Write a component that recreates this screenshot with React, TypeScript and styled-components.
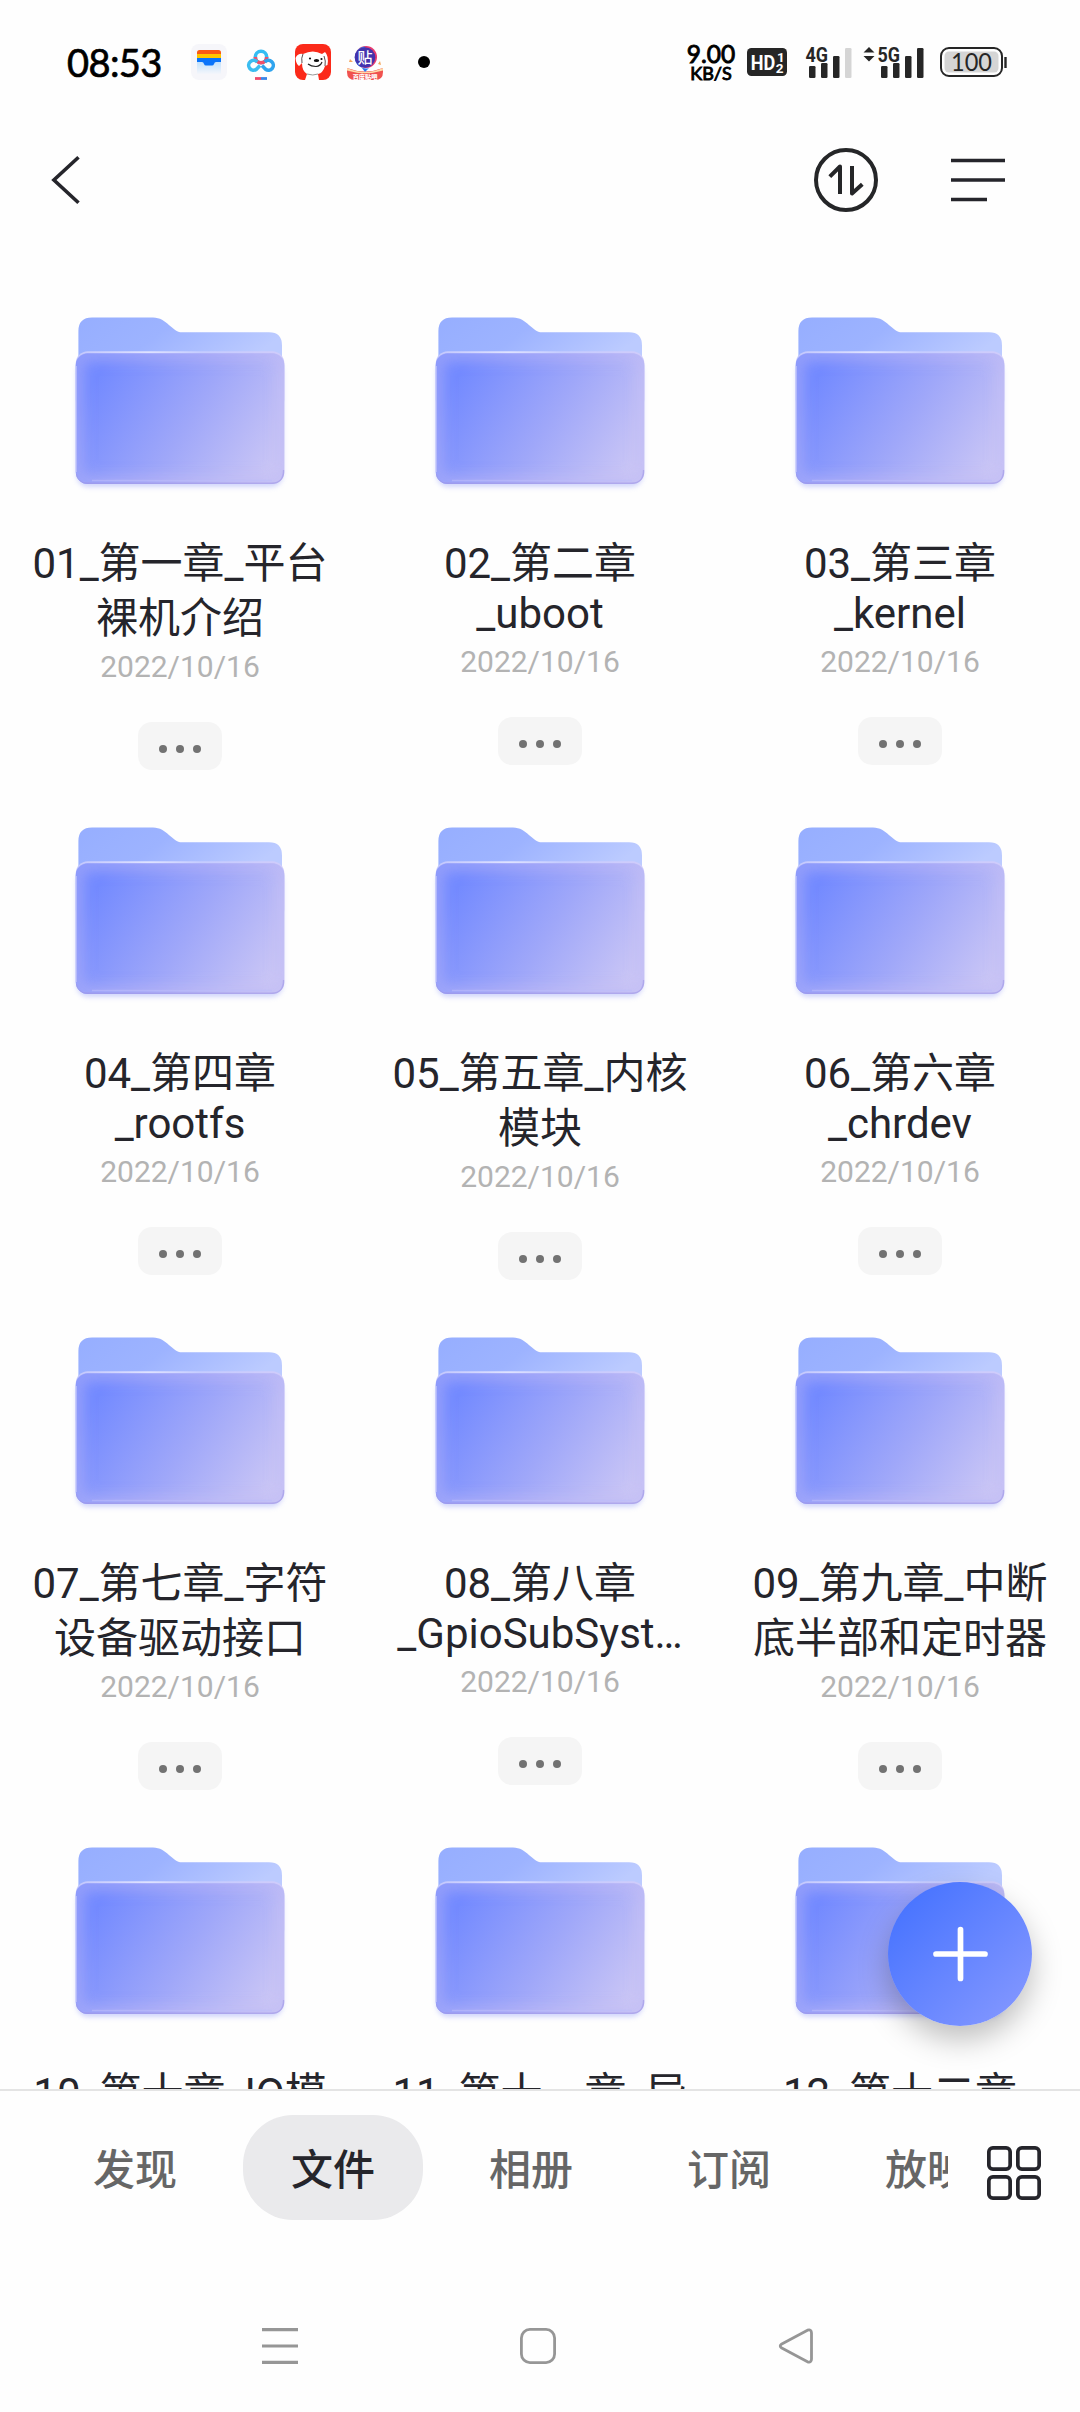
import React from 'react';
import styled, { createGlobalStyle } from 'styled-components';

const GlobalStyle = createGlobalStyle`
  * { box-sizing: border-box; }
  body {
    margin: 0;
    background: #fefefe;
    font-family: Roboto, 'Noto Sans CJK SC', sans-serif;
  }
`;

const Screen = styled.div`
  position: relative;
  display: flex;
  flex-direction: column;
  width: 1080px;
  height: 2412px;
  overflow: hidden;
  background: #fefefe;
  color: #25252b;
`;

/* ---------- status bar ---------- */

const StatusBar = styled.div`
  display: flex;
  justify-content: space-between;
  align-items: center;
  height: 120px;
  padding: 4px 72px 0 66px;
`;

const StatusGroup = styled.div<{ $gap?: number; $offset?: number }>`
  display: flex;
  align-items: center;
  gap: ${(p) => p.$gap ?? 0}px;
  margin-left: ${(p) => p.$offset ?? 0}px;
`;

const Clock = styled.div`
  width: 125px;
  padding-left: 1px;
  font-family: Lato, sans-serif;
  font-size: 38px;
  font-weight: 400;
  letter-spacing: -0.6px;
  line-height: 40px;
  color: #000;
  -webkit-text-stroke: 0.7px #000;
`;

const MoreDot = styled.div`
  width: 12px;
  height: 12px;
  margin-left: 35px;
  border-radius: 50%;
  background: #000;
`;

const Speed = styled.div`
  display: flex;
  flex-direction: column;
  align-items: center;
  width: 52px;
  margin-right: 10px;
  font-family: Lato, sans-serif;
  color: #000;
  -webkit-text-stroke: 0.9px #000;
`;

const SpeedValue = styled.span`
  font-size: 24.5px;
  font-weight: 400;
  line-height: 22px;
`;

const SpeedUnit = styled.span`
  font-size: 18px;
  font-weight: 400;
  line-height: 16px;
`;

const WalletIcon = () => (
  <svg width="36" height="36" viewBox="0 0 36 36">
    <defs>
      <linearGradient id="walletFade" x1="0" y1="0" x2="0" y2="1">
        <stop offset="0" stopColor="#bfe0fb" />
        <stop offset="1" stopColor="#f4f6fb" />
      </linearGradient>
    </defs>
    <rect width="36" height="36" rx="8" fill="#f6f6fa" />
    <rect x="6" y="17" width="24" height="13" fill="url(#walletFade)" />
    <path d="M6 10V8.500Q6 6 8.500 6H27.500Q30 6 30 8.500V10Z" fill="#fa5a14" />
    <rect x="6" y="10" width="24" height="4" fill="#ffc600" />
    <path d="M6 14H30V18H25Q23.500 18 23 20Q22.500 21.500 21 21.500H15Q13.500 21.500 13 20Q12.500 18 11 18H6Z" fill="#0a74fa" />
  </svg>
);

const CloudIcon = () => (
  <svg width="36" height="36" viewBox="0 0 36 36" fill="none" strokeWidth="3.600">
    <circle cx="18" cy="13" r="5.700" stroke="#35bdf3" />
    <path d="M12.300 13A5.700 5.700 0 0 0 23.700 13" stroke="#f0506a" />
    <path d="M14.200 18A4.900 4.900 0 1 0 13.500 25.200L17 21.500" stroke="#3bbdf0" />
    <path d="M21.800 18A4.900 4.900 0 1 1 22.500 25.200L19 21.500" stroke="#2fa4ee" />
    <path d="M12 34.500H18" stroke="#ef4a68" strokeWidth="2.800" />
    <path d="M18 34.500H24" stroke="#3a86e8" strokeWidth="2.800" />
  </svg>
);

const DogIcon = () => (
  <svg width="36" height="36" viewBox="0 0 36 36">
    <rect width="36" height="36" rx="8" fill="#fb2a1a" />
    <path d="M8 10Q18 5 27 10L30 8Q34 12 32.500 21L30 22Q28 29 23 30L24 36H10L12 30Q7 27 7 19L4 22Q1 20 0.500 14Q3 9 8 10Z" fill="#fff" />
    <path d="M7 19Q6 14 8 10M30 22Q31 17 29 12" fill="none" stroke="#4a3a3a" strokeWidth="0.900" />
    <ellipse cx="21.500" cy="16.500" rx="2.700" ry="1.600" fill="#111" />
    <circle cx="15" cy="14.500" r="1.100" fill="#111" />
    <circle cx="26.500" cy="15" r="1.100" fill="#111" />
    <path d="M13 20Q16 22.500 21 22.500Q25.500 22 27 18" fill="none" stroke="#222" strokeWidth="1.200" />
    <path d="M12 30Q18 32 23 30" fill="none" stroke="#999" strokeWidth="1" />
  </svg>
);

const TiebaIcon = () => (
  <svg width="36" height="36" viewBox="0 0 36 36">
    <path d="M0 24Q18 31 36 24V28Q36 36 28 36H8Q0 36 0 28Z" fill="#f0524f" />
    <path d="M0 24Q18 32 36 24V26.500Q18 32 0 26.500Z" fill="#ffd9a8" />
    <path d="M3 15L6 18L2 18ZM33 17L34 21L31 20Z" fill="#f5a65b" />
    <circle cx="19" cy="13" r="11" fill="#e63a6f" />
    <path d="M18 2.500A11 11 0 1 0 22 24L18 28L15 24Z" fill="#2b7bf0" />
    <circle cx="18" cy="13.500" r="10.300" fill="#4433ad" />
    <text x="18" y="19" textAnchor="middle" fontFamily="'Noto Sans CJK SC', sans-serif" fontSize="15" fontWeight="500" fill="#fff">贴</text>
    <text x="18" y="34.500" textAnchor="middle" fontFamily="'Noto Sans CJK SC', sans-serif" fontSize="6.200" fontWeight="900" fill="#fff">百度贴吧</text>
  </svg>
);

const HdIcon = () => (
  <svg width="40" height="28" viewBox="0 0 40 28" fontFamily="Roboto, sans-serif" fontWeight="700" fill="#fff">
    <rect width="40" height="28" rx="4.500" fill="#262626" />
    <text x="3.800" y="21.500" fontSize="21" textLength="24.500" lengthAdjust="spacingAndGlyphs">HD</text>
    <text x="30" y="13.500" fontSize="13.500">1</text>
    <text x="28.800" y="25" fontSize="13.500">2</text>
  </svg>
);

const barTops = [20, 17, 10, 2];

const Signal = ({ label, active, arrows }: { label: string; active: number; arrows?: boolean }) => (
  <svg width={arrows ? 62 : 48} height="32" viewBox={arrows ? '-14 0 62 32' : '0 0 48 32'} fill="#262626">
    {barTops.map((top, i) => (
      <rect key={top} x={4 + i * 12} y={top} width="6.500" height={32 - top} rx="1.300" fill={i < active ? '#262626' : '#d5d5d5'} />
    ))}
    <text x="0.500" y="15.500" fontFamily="Roboto, sans-serif" fontWeight="700" fontSize="20.500" textLength="22.500" lengthAdjust="spacingAndGlyphs" stroke="#fefefe" strokeWidth="2" paintOrder="stroke">{label}</text>
    {arrows && <path d="M-13.500 6.500L-8 1L-2.500 6.500ZM-13.500 10L-8 15.500L-2.500 10Z" />}
  </svg>
);

const Battery = () => (
  <svg width="68" height="30" viewBox="0 0 68 30">
    <rect x="1" y="1" width="61" height="28" rx="8" fill="#fefefe" stroke="#262626" strokeWidth="2" />
    <rect x="4.500" y="4.500" width="54" height="21" rx="4.500" fill="#d5d5d5" />
    <path d="M65.500 10V21" stroke="#262626" strokeWidth="2.400" />
    <text x="31.500" y="24" textAnchor="middle" fontFamily="Lato, sans-serif" fontSize="24.500" textLength="41" lengthAdjust="spacingAndGlyphs" fill="#262626">100</text>
  </svg>
);

/* ---------- header ---------- */

const Header = styled.header`
  display: flex;
  align-items: center;
  justify-content: space-between;
  flex: none;
  height: 120px;
  padding: 0 75px 0 50px;
`;

const HeaderActions = styled.div`
  display: flex;
  align-items: center;
  gap: 73px;
`;

const BackIcon = () => (
  <svg width="32" height="50" viewBox="0 0 32 50" fill="none" stroke="#25252b" strokeWidth="3.600">
    <path d="M28.500 2.200L3.900 25L28.500 47.800" />
  </svg>
);

const TransferIcon = () => (
  <svg width="64" height="64" viewBox="0 0 64 64" fill="none" stroke="#252628" strokeWidth="4">
    <circle cx="32" cy="32" r="30" />
    <path d="M26 46V18.500L15.800 28.700" strokeLinejoin="round" />
    <path d="M38 18V45.500L48.300 36.300" strokeLinejoin="round" />
  </svg>
);

const MenuIcon = () => (
  <svg width="54" height="44" viewBox="0 0 54 44" stroke="#25252b" strokeWidth="3.500">
    <path d="M0 2.500H54M0 22H54M0 41.500H36" />
  </svg>
);

/* ---------- folders ---------- */

const FolderArea = styled.main`
  flex: none;
  height: 1849px;
  overflow: hidden;
`;

const FolderGrid = styled.div`
  display: grid;
  grid-template-columns: repeat(3, 360px);
  grid-auto-rows: 510px;
  padding-top: 50px;
`;

const FolderCell = styled.div`
  display: flex;
  flex-direction: column;
  align-items: center;
`;

const Title = styled.div`
  margin-top: 19px;
  font-size: 42px;
  text-align: center;
  color: #25252b;
`;

const TitleLine = styled.div<{ $tall?: boolean }>`
  padding-top: ${(p) => (p.$tall ? 5 : 0)}px;
  line-height: 50px;
  white-space: nowrap;
`;

const FolderDate = styled.div`
  margin-top: 5px;
  font-size: 30px;
  line-height: 36px;
  color: #b3b3b3;
`;

const MoreButton = styled.button`
  display: flex;
  align-items: center;
  justify-content: center;
  gap: 9px;
  width: 84px;
  height: 48px;
  margin-top: 37px;
  padding: 5px 0 0;
  border: 0;
  border-radius: 14px;
  background: #f5f5f5;
`;

const Dot = styled.span`
  width: 8px;
  height: 8px;
  border-radius: 50%;
  background: #727272;
`;

const HiddenDefs = styled.svg`
  position: absolute;
`;

const FolderDefs = () => (
  <HiddenDefs width="0" height="0">
    <defs>
      <linearGradient id="folderBack" x1="0" y1="0" x2="1" y2="0.350">
        <stop offset="0" stopColor="#96aeff" />
        <stop offset="0.450" stopColor="#9db3ff" />
        <stop offset="1" stopColor="#bccbff" />
      </linearGradient>
      <linearGradient id="folderFront" gradientUnits="userSpaceOnUse" x1="56" y1="88" x2="228" y2="196">
        <stop offset="0" stopColor="#738aff" />
        <stop offset="0.500" stopColor="#9fa7f9" />
        <stop offset="1" stopColor="#cdc8f5" />
      </linearGradient>
      <linearGradient id="folderShine" x1="0" y1="0" x2="1" y2="0">
        <stop offset="0" stopColor="#c3c7fd" />
        <stop offset="0.350" stopColor="#dfe2ff" />
        <stop offset="0.600" stopColor="#c5ccff" />
        <stop offset="1" stopColor="#d0ccfb" />
      </linearGradient>
      <linearGradient id="folderRim" x1="0" y1="0" x2="1" y2="0.300">
        <stop offset="0" stopColor="#99a2fa" />
        <stop offset="0.600" stopColor="#b2b0f6" />
        <stop offset="1" stopColor="#c2bef5" />
      </linearGradient>
      <filter id="soft" x="-20%" y="-20%" width="140%" height="140%">
        <feGaussianBlur stdDeviation="7" />
      </filter>
      <filter id="lowShadow" x="-10%" y="-10%" width="120%" height="125%">
        <feGaussianBlur stdDeviation="2.500" />
      </filter>
      <clipPath id="frontClip">
        <rect x="35.800" y="63" width="208.500" height="131" rx="12" />
      </clipPath>
    </defs>
  </HiddenDefs>
);

const FolderIcon = () => (
  <svg width="280" height="230" viewBox="0 0 280 230">
    <path d="M38.400 80V41Q38.400 27.500 52 27.500H113C127 27.500 132 42.300 142 42.300H229Q242 42.300 242 55.500V80Z" fill="url(#folderBack)" />
    <rect x="36.500" y="70" width="206.500" height="127" rx="12" fill="#b9c0fa" opacity="0.650" filter="url(#lowShadow)" />
    <rect x="35.800" y="61.300" width="208.500" height="60" rx="12" fill="url(#folderShine)" />
    <rect x="35.800" y="63.500" width="208.500" height="130.500" rx="12" fill="url(#folderFront)" />
    <g clipPath="url(#frontClip)">
      <rect x="35.800" y="63" width="208.500" height="131" rx="12" fill="none" stroke="url(#folderRim)" strokeWidth="15" opacity="0.900" filter="url(#soft)" />
      <path d="M52 190.500H232" stroke="#bcbcfb" strokeWidth="1.500" opacity="0.600" />
      <path d="M36.300 184Q36.300 193.300 48 193.300H232Q243.700 193.300 243.700 180" fill="none" stroke="#9d93e6" strokeWidth="1.600" opacity="0.550" />
      <path d="M36.300 182V76" stroke="#c9cbfd" strokeWidth="1.200" opacity="0.700" />
    </g>
  </svg>
);

type Folder = { lines: { text: string; tall?: boolean }[] };

const folders: Folder[] = [
  { lines: [{ text: '01_第一章_平台' }, { text: '裸机介绍', tall: true }] },
  { lines: [{ text: '02_第二章' }, { text: '_uboot' }] },
  { lines: [{ text: '03_第三章' }, { text: '_kernel' }] },
  { lines: [{ text: '04_第四章' }, { text: '_rootfs' }] },
  { lines: [{ text: '05_第五章_内核' }, { text: '模块', tall: true }] },
  { lines: [{ text: '06_第六章' }, { text: '_chrdev' }] },
  { lines: [{ text: '07_第七章_字符' }, { text: '设备驱动接口', tall: true }] },
  { lines: [{ text: '08_第八章' }, { text: '_GpioSubSyst…' }] },
  { lines: [{ text: '09_第九章_中断' }, { text: '底半部和定时器', tall: true }] },
  { lines: [{ text: '10_第十章_IO模' }] },
  { lines: [{ text: '11_第十一章_异' }] },
  { lines: [{ text: '12_第十二章' }] },
];

const FolderItem = ({ folder }: { folder: Folder }) => (
  <FolderCell>
    <FolderIcon />
    <Title>
      {folder.lines.map((l) => (
        <TitleLine key={l.text} $tall={l.tall}>{l.text}</TitleLine>
      ))}
    </Title>
    {folder.lines.length > 1 && (
      <>
        <FolderDate>2022/10/16</FolderDate>
        <MoreButton>
          <Dot />
          <Dot />
          <Dot />
        </MoreButton>
      </>
    )}
  </FolderCell>
);

/* ---------- floating add button ---------- */

const AddButton = styled.button`
  position: absolute;
  right: 48px;
  bottom: 386px;
  display: flex;
  align-items: center;
  justify-content: center;
  width: 144px;
  height: 144px;
  padding: 0;
  border: 0;
  border-radius: 50%;
  background: linear-gradient(135deg, #4a75ff 14%, #8598ff 95%);
  box-shadow: 0 14px 30px rgba(0, 0, 0, 0.25);
`;

/* ---------- bottom tabs ---------- */

const TabBar = styled.nav`
  display: flex;
  flex: none;
  align-items: flex-start;
  height: 171px;
  padding: 24px 39px 0 45px;
  border-top: 2px solid #e4e4e4;
`;

const TabStrip = styled.div`
  display: flex;
  gap: 18px;
  width: 903px;
  overflow: hidden;
`;

const Tab = styled.div<{ $active?: boolean }>`
  flex: none;
  width: 180px;
  height: 105px;
  border-radius: 50px;
  font-size: 42px;
  font-weight: 500;
  line-height: 112px;
  text-align: center;
  color: ${(p) => (p.$active ? '#25252b' : '#666')};
  background: ${(p) => (p.$active ? '#eaeaec' : 'transparent')};
`;

const GridButton = styled.div`
  display: flex;
  align-items: center;
  height: 116px;
  margin-left: 39px;
`;

const GridIcon = () => (
  <svg width="54" height="54" viewBox="0 0 54 54" fill="none" stroke="#25252b" strokeWidth="3.700">
    <rect x="1.850" y="1.850" width="21.300" height="21.300" rx="4" />
    <rect x="30.850" y="1.850" width="21.300" height="21.300" rx="4" />
    <rect x="1.850" y="30.850" width="21.300" height="21.300" rx="4" />
    <rect x="30.850" y="30.850" width="21.300" height="21.300" rx="4" />
  </svg>
);

/* ---------- system navigation ---------- */

const SystemNav = styled.div`
  display: flex;
  flex: none;
  justify-content: space-between;
  align-items: center;
  height: 152px;
  padding: 20px 266px 0 262px;
`;

const RecentsIcon = () => (
  <svg width="36" height="38" viewBox="0 0 36 38" stroke="#969696" strokeWidth="3.200">
    <path d="M0 2.700H36M0 19H36M0 35.300H36" />
  </svg>
);

const HomeIcon = () => (
  <svg width="36" height="36" viewBox="0 0 36 36" fill="none" stroke="#969696" strokeWidth="2.800">
    <rect x="1.400" y="1.400" width="33.200" height="33.200" rx="8.500" />
  </svg>
);

const SystemBackIcon = () => (
  <svg width="36" height="36" viewBox="0 0 36 36" fill="none" stroke="#969696" strokeWidth="2.800" strokeLinejoin="round">
    <path d="M29.500 2.200L3.300 16.200Q1.200 18 3.300 19.800L29.500 33.800Q33.500 35 33.500 31V5Q33.500 1 29.500 2.200Z" />
  </svg>
);

export default function App() {
  return (
    <Screen>
      <GlobalStyle />
      <FolderDefs />
      <StatusBar>
        <StatusGroup>
          <Clock>08:53</Clock>
          <StatusGroup $gap={16}>
            <WalletIcon />
            <CloudIcon />
            <DogIcon />
            <TiebaIcon />
          </StatusGroup>
          <MoreDot />
        </StatusGroup>
        <StatusGroup>
          <Speed>
            <SpeedValue>9.00</SpeedValue>
            <SpeedUnit>KB/S</SpeedUnit>
          </Speed>
          <StatusGroup $gap={18}>
            <HdIcon />
            <Signal label="4G" active={3} />
          </StatusGroup>
          <StatusGroup $gap={15} $offset={10}>
            <Signal label="5G" active={4} arrows />
            <Battery />
          </StatusGroup>
        </StatusGroup>
      </StatusBar>
      <Header>
        <BackIcon />
        <HeaderActions>
          <TransferIcon />
          <MenuIcon />
        </HeaderActions>
      </Header>
      <FolderArea>
        <FolderGrid>
          {folders.map((f) => (
            <FolderItem key={f.lines[0].text} folder={f} />
          ))}
        </FolderGrid>
      </FolderArea>
      <TabBar>
        <TabStrip>
          <Tab>发现</Tab>
          <Tab $active>文件</Tab>
          <Tab>相册</Tab>
          <Tab>订阅</Tab>
          <Tab>放映</Tab>
        </TabStrip>
        <GridButton>
          <GridIcon />
        </GridButton>
      </TabBar>
      <SystemNav>
        <RecentsIcon />
        <HomeIcon />
        <SystemBackIcon />
      </SystemNav>
      <AddButton>
        <svg width="56" height="56" viewBox="0 0 56 56" stroke="#fff" strokeWidth="5.700" strokeLinecap="round">
          <path d="M28.500 3.500V52.500M4 28H53" />
        </svg>
      </AddButton>
    </Screen>
  );
}
